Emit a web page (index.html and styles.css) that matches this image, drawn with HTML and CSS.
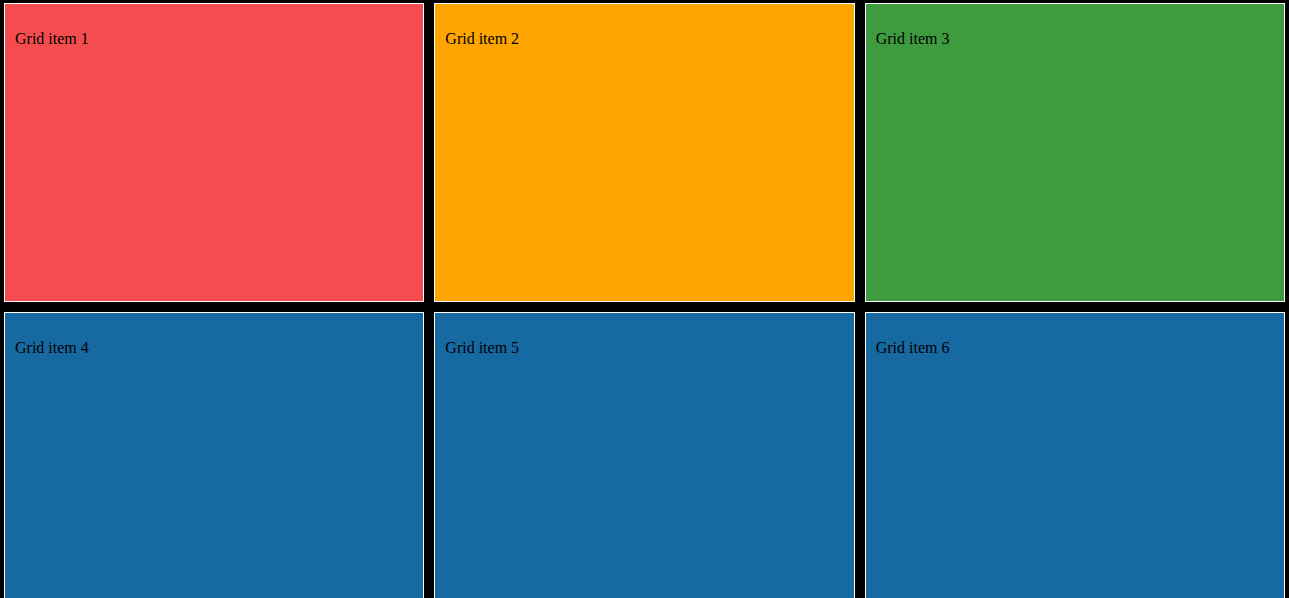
FILE: index.html
```html
<!DOCTYPE html>
<html>
<head>
<meta charset="utf-8">
<link rel="stylesheet" href="styles.css">
</head>
<body>
<div class="grid">
  <div class="item red"><p>Grid item 1</p></div>
  <div class="item orange"><p>Grid item 2</p></div>
  <div class="item green"><p>Grid item 3</p></div>
  <div class="item blue"><p>Grid item 4</p></div>
  <div class="item blue"><p>Grid item 5</p></div>
  <div class="item blue"><p>Grid item 6</p></div>
</div>
</body>
</html>
```
FILE: styles.css
```css
html, body {
  margin: 0;
  padding: 0;
  background: #000;
}
body {
  font-family: "Liberation Serif", "Times New Roman", serif;
  font-size: 16px;
  color: #000;
  overflow: hidden;
}
.grid {
  display: grid;
  grid-template-columns: repeat(3, 1fr);
  grid-auto-rows: 299px;
  gap: 10px;
  padding: 3px 4px;
}
.item {
  box-sizing: border-box;
  border: 1px solid #fff;
  padding: 10px;
}
.item p {
  margin: 16px 0;
}
.red { background: #f44d4f; }
.orange { background: #ffa500; }
.green { background: #3e9c3f; }
.blue { background: #1769a2; }
```
